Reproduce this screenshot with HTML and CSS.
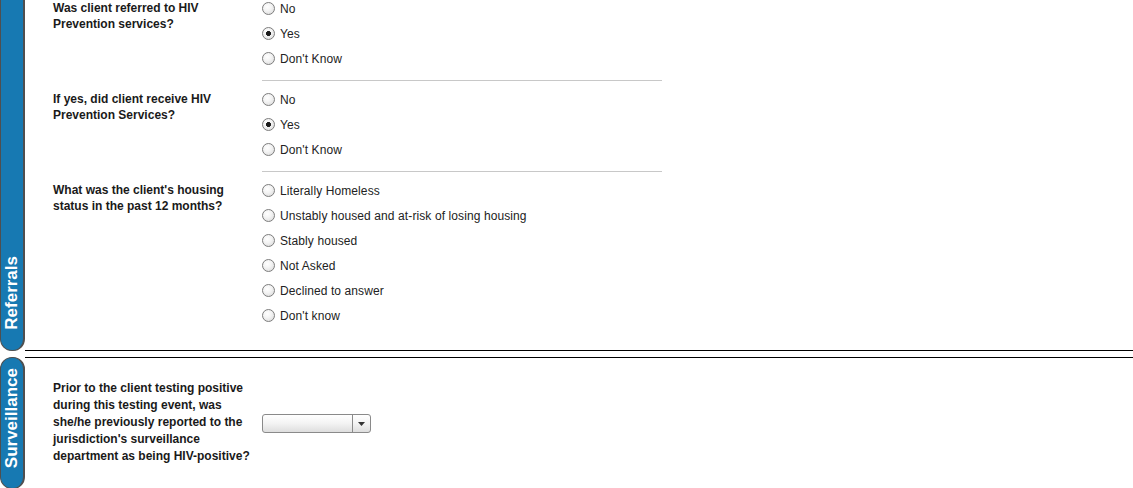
FILE: index.html
```html
<html>

<head>
  <meta name="viewport" content="width=device-width, initial-scale=1">
  <link rel="stylesheet" href="styles.css">
</head>

<body>
  <div class="page">

    <!-- Referrals (scrolled, top of section is above the fold) -->
    <div class="section">
      <div class="tab continued"><span class="tab_label">Referrals</span></div>
      <div class="section_body continued">

        <div class="question">
          <div class="q_label">Was client referred to HIV Prevention services?</div>
          <div class="options">
            <label class="option"><input type="radio" name="ref_prev"> No</label>
            <label class="option"><input type="radio" name="ref_prev" checked> Yes</label>
            <label class="option"><input type="radio" name="ref_prev"> Don't Know</label>
          </div>
        </div>

        <div class="question">
          <div class="q_label">If yes, did client receive HIV Prevention Services?</div>
          <div class="options">
            <label class="option"><input type="radio" name="recv_prev"> No</label>
            <label class="option"><input type="radio" name="recv_prev" checked> Yes</label>
            <label class="option"><input type="radio" name="recv_prev"> Don't Know</label>
          </div>
        </div>

        <div class="question">
          <div class="q_label">What was the client's housing status in the past 12 months?</div>
          <div class="options last">
            <label class="option"><input type="radio" name="housing"> Literally Homeless</label>
            <label class="option"><input type="radio" name="housing"> Unstably housed and at-risk of losing housing</label>
            <label class="option"><input type="radio" name="housing"> Stably housed</label>
            <label class="option"><input type="radio" name="housing"> Not Asked</label>
            <label class="option"><input type="radio" name="housing"> Declined to answer</label>
            <label class="option"><input type="radio" name="housing"> Don't know</label>
          </div>
        </div>

      </div>
    </div>

    <!-- Surveillance -->
    <div class="section">
      <div class="tab"><span class="tab_label">Surveillance</span></div>
      <div class="section_body surveillance">
        <div class="question centered">
          <div class="q_label">Prior to the client testing positive during this testing event, was she/he previously reported to the jurisdiction's surveillance department as being HIV-positive?</div>
          <div class="select">
            <div class="select_value"></div>
            <div class="select_arrow">
              <svg width="7" height="4" viewBox="0 0 7 4"><path d="M0 0h7L3.5 4z" fill="#333"/></svg>
            </div>
          </div>
        </div>
      </div>
    </div>

  </div>
</body>

</html>
```

FILE: styles.css
```css
body {
  margin: 0;
  font-family: "Liberation Sans", Arial, sans-serif;
  font-size: 12px;
  color: #222;
  background: #fff;
}

.page {
  margin-top: -4px;
}

.section {
  display: flex;
}

.section + .section {
  margin-top: 6px;
}

.tab {
  width: 22px;
  flex: none;
  background: #1779b2;
  border: 1px solid #4f4f4f;
  border-right-width: 2px;
  border-radius: 12px;
  display: flex;
  flex-direction: column;
  justify-content: flex-end;
  align-items: center;
  padding: 10px 0 20px;
}

.tab.continued {
  border-top: 0;
  border-radius: 0 0 12px 12px;
}

.tab_label {
  writing-mode: vertical-rl;
  transform: rotate(180deg);
  color: #fff;
  font-weight: bold;
  font-size: 17px;
  line-height: 20px;
}

.section_body {
  flex: 1;
  border-top: 1px solid #000;
  border-bottom: 1px solid #000;
  padding: 0 0 22px 28px;
}

.section_body.continued {
  border-top: 0;
}

.question {
  display: grid;
  grid-template-columns: 209px 400px;
}

.question + .question {
  margin-top: 6px;
}

.q_label {
  font-weight: bold;
  line-height: 16px;
  padding-top: 4px;
  color: #1a1a1a;
}

.options {
  padding-bottom: 9px;
  border-bottom: 1px solid #c8c8c8;
}

.options.last {
  padding-bottom: 0;
  border-bottom: 0;
}

.option {
  display: flex;
  align-items: center;
  gap: 5px;
  height: 25px;
  letter-spacing: 0.1px;
}

.option input {
  appearance: none;
  -webkit-appearance: none;
  margin: 0;
  width: 13px;
  height: 13px;
  border: 1px solid #7d7d7d;
  border-radius: 50%;
  background: radial-gradient(circle at 40% 35%, #fff 0, #f4f4f4 40%, #d6d6d6 100%);
}

.option input:checked {
  background: radial-gradient(circle, #1a1a1a 0, #1a1a1a 2.2px, transparent 2.8px),
    radial-gradient(circle at 40% 35%, #fff 0, #f4f4f4 40%, #d6d6d6 100%);
}

.surveillance {
  padding: 22px 0 23px 28px;
}

.surveillance .q_label {
  line-height: 17px;
  padding-top: 0;
}

.question.centered {
  align-items: center;
}

.select {
  display: flex;
  width: 109px;
  height: 19px;
  margin-top: 2px;
  box-sizing: border-box;
  border: 1px solid #8a8a8a;
  border-radius: 3px;
  background: linear-gradient(#fff, #f3f3f3 50%, #dedede);
}

.select_value {
  flex: 1;
}

.select_arrow {
  width: 17px;
  border-left: 1px solid #8a8a8a;
  display: flex;
  align-items: center;
  justify-content: center;
}
```
